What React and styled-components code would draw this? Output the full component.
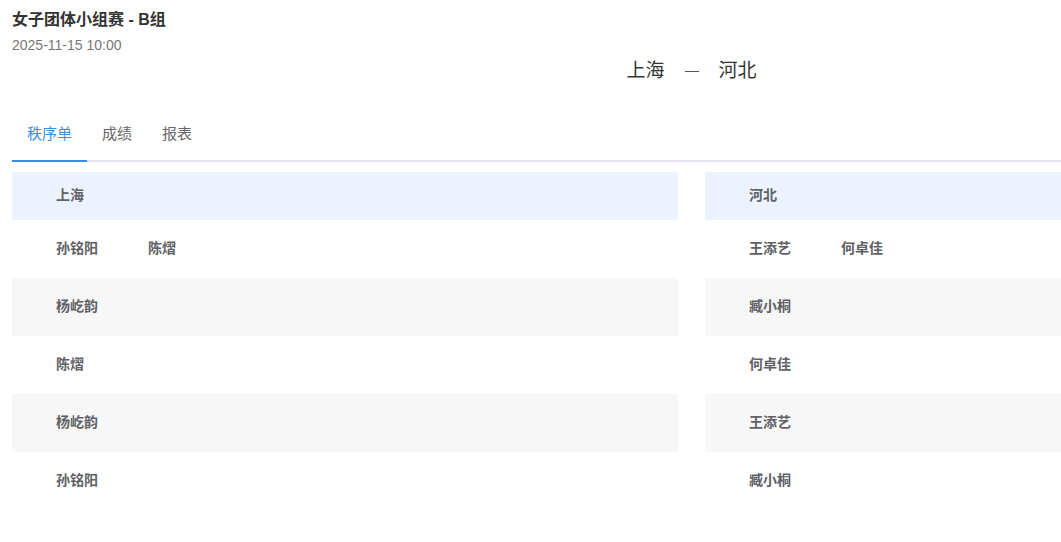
import React, { useState } from "react";
import styled, { createGlobalStyle } from "styled-components";

const GlobalStyle = createGlobalStyle`
  html, body {
    margin: 0;
    padding: 0;
    background: #fff;
    overflow: hidden;
  }
  body {
    font-family: "Liberation Sans", "Noto Sans CJK SC", sans-serif;
    color: #333;
  }
`;

const Page = styled.div`
  width: 1359px;
  padding: 9px 12px 0;
`;

const Title = styled.h1`
  margin: 0;
  font-size: 16px;
  line-height: 22px;
  font-weight: 700;
  color: #333;
`;

const DateText = styled.div`
  margin-top: 5px;
  font-size: 14px;
  line-height: 18px;
  color: #777;
`;

const Matchup = styled.div`
  margin-top: 4px;
  display: flex;
  justify-content: center;
  align-items: center;
  gap: 20px;
  font-size: 19px;
  line-height: 26px;
  color: #333;
`;

const Dash = styled.span`
  display: inline-block;
  width: 14px;
  height: 1px;
  background: #555;
`;

const TabBar = styled.div`
  margin-top: 36px;
  display: flex;
  border-bottom: 2px solid #e4e7ed;
`;

const Tab = styled.div`
  height: 42px;
  padding: 0 15px;
  box-sizing: border-box;
  line-height: 28px;
  font-size: 15px;
  color: ${(p) => (p.active ? "#3a8ee6" : "#666")};
  border-bottom: 2px solid ${(p) => (p.active ? "#3a8ee6" : "transparent")};
  margin-bottom: -2px;
  cursor: pointer;
`;

const Tables = styled.div`
  margin-top: 10px;
  display: grid;
  grid-template-columns: 666px 666px;
  column-gap: 27px;
`;

const Column = styled.div`
  display: flex;
  flex-direction: column;
`;

const Row = styled.div`
  display: flex;
  align-items: center;
  box-sizing: border-box;
  padding: 0 0 4px 44px;
  height: ${(p) => (p.head ? "48px" : "58px")};
  background: ${(p) => (p.head ? "#ecf3fe" : p.striped ? "#f7f7f7" : "#fff")};
`;

const Name = styled.span`
  width: 92px;
  font-size: 14px;
  font-weight: 700;
  color: #5f6166;
`;

const left = {
  team: "上海",
  rows: [["孙铭阳", "陈熠"], ["杨屹韵"], ["陈熠"], ["杨屹韵"], ["孙铭阳"]],
};

const right = {
  team: "河北",
  rows: [["王添艺", "何卓佳"], ["臧小桐"], ["何卓佳"], ["王添艺"], ["臧小桐"]],
};

const TeamTable = ({ data }) => (
  <Column>
    <Row head>
      <Name>{data.team}</Name>
    </Row>
    {data.rows.map((names, i) => (
      <Row key={i} striped={i % 2 === 1}>
        {names.map((n) => (
          <Name key={n}>{n}</Name>
        ))}
      </Row>
    ))}
  </Column>
);

const tabs = ["秩序单", "成绩", "报表"];

const App = () => {
  const [active, setActive] = useState(0);
  return (
    <Page>
      <GlobalStyle />
      <Title>女子团体小组赛 - B组</Title>
      <DateText>2025-11-15 10:00</DateText>
      <Matchup>
        <span>上海</span>
        <Dash />
        <span>河北</span>
      </Matchup>
      <TabBar>
        {tabs.map((t, i) => (
          <Tab key={t} active={i === active} onClick={() => setActive(i)}>
            {t}
          </Tab>
        ))}
      </TabBar>
      <Tables>
        <TeamTable data={left} />
        <TeamTable data={right} />
      </Tables>
    </Page>
  );
};

export default App;
